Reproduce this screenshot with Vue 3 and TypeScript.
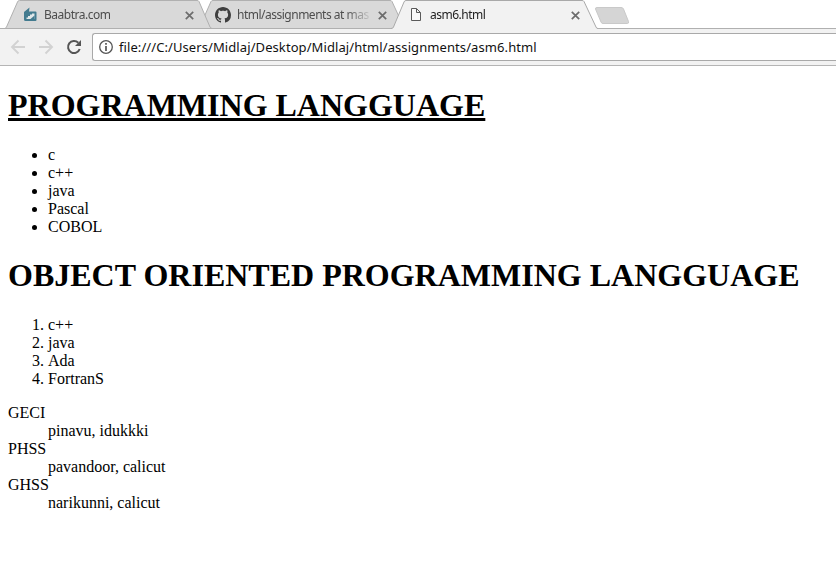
<script setup lang="ts">
interface Tab {
  title: string
  icon: 'site' | 'github' | 'file'
  active: boolean
}

interface School {
  name: string
  place: string
}

const tabs: Tab[] = [
  { title: 'Baabtra.com', icon: 'site', active: false },
  { title: 'html/assignments at mas', icon: 'github', active: false },
  { title: 'asm6.html', icon: 'file', active: true },
]
const url = 'file:///C:/Users/Midlaj/Desktop/Midlaj/html/assignments/asm6.html'
const languages: string[] = ['c', 'c++', 'java', 'Pascal', 'COBOL']
const objectOriented: string[] = ['c++', 'java', 'Ada', 'FortranS']
const schools: School[] = [
  { name: 'GECI', place: 'pinavu, idukkki' },
  { name: 'PHSS', place: 'pavandoor, calicut' },
  { name: 'GHSS', place: 'narikunni, calicut' },
]
</script>

<template>
  <div class="browser">
    <header class="tab-strip">
      <svg class="tab-shapes" width="836" height="29" viewBox="0 0 836 29">
        <path d="M204.500 28.500 L205 15 L211 1.500 Q211.500 .5 213 .5 H390 Q391.500 .5 392 1.500 L404.500 28.500" fill="#d9d9d9" stroke="#b0b0b0" />
        <path d="M5 28.500 Q6 28 6.500 27 L17.500 2 Q18 .5 19.500 .5 H197 Q198.500 .5 199 1.500 L210 27 Q210.500 28 212 28.500" fill="#d9d9d9" stroke="#b0b0b0" />
        <path d="M0 28.500 H836" stroke="#b0b0b0" />
        <path d="M391 29 V28.500 Q393 28.500 393.500 27 L404 2 Q404.500 .5 406 .5 H582 Q583.500 .5 584 1.500 L596 27 Q596.500 28.500 598 28.500 V29 Z" fill="#f2f2f2" />
        <path d="M391 28.500 Q393 28.500 393.500 27 L404 2 Q404.500 .5 406 .5 H582 Q583.500 .5 584 1.500 L596 27 Q596.500 28.500 598 28.500" fill="none" stroke="#a9a9a9" />
        <path d="M597 7.500 H621 Q623 7.500 623.500 9 L628.500 21.500 Q629 23.500 627.500 23.500 H603 Q601.500 23.500 601 22 L595.500 9 Q595.200 7.500 597 7.500Z" fill="#d5d5d5" stroke="#c9c9c9" />
      </svg>
      <div v-for="tab in tabs" :key="tab.title" class="tab" :class="{ active: tab.active }">
        <svg v-if="tab.icon === 'site'" class="favicon" width="16" height="16" viewBox="0 0 16 16">
          <path d="M2 5 L7.500 .5 L7 4.500 H13.500 Q14.500 4.500 14.500 5.500 V13 Q14.500 14 13.500 14 H3.500 Q2 14 2 12.500Z" fill="#437b8f" />
          <path d="M4.500 12 V10.500 H6 V9 H8 V7.500 H10 V6.500 H12.500 V12Z" fill="#e0e7e9" />
          <path d="M12.500 8.500 V12 H8.500Z" fill="#437b8f" />
        </svg>
        <svg v-else-if="tab.icon === 'github'" class="favicon" width="16" height="16" viewBox="0 0 16 16">
          <path fill="#3f3f3f" d="M8 0C3.580 0 0 3.580 0 8c0 3.540 2.290 6.530 5.470 7.590.4.070.55-.17.55-.38 0-.19-.01-.82-.01-1.490-2.010.37-2.530-.49-2.690-.94-.09-.23-.48-.94-.82-1.130-.28-.15-.68-.52-.01-.53.63-.01 1.080.58 1.230.82.72 1.210 1.870.87 2.330.66.07-.52.28-.87.51-1.070-1.780-.2-3.640-.89-3.640-3.950 0-.87.31-1.590.82-2.150-.08-.2-.36-1.020.08-2.120 0 0 .67-.21 2.200.82.64-.18 1.320-.27 2-.27s1.360.09 2 .27c1.530-1.040 2.200-.82 2.200-.82.44 1.100.16 1.920.08 2.120.51.56.82 1.270.82 2.150 0 3.070-1.870 3.750-3.650 3.950.29.25.54.73.54 1.480 0 1.070-.01 1.930-.01 2.200 0 .21.15.46.55.38A8.010 8.010 0 0 0 16 8c0-4.420-3.580-8-8-8Z" />
        </svg>
        <svg v-else class="favicon" width="16" height="16" viewBox="0 0 16 16">
          <path d="M3.500 1.500 H8.500 L12.500 5.500 V13.500 H3.500Z M8.500 1.500 V5.500 H12.500" fill="#fafafa" stroke="#5a5a5a" />
        </svg>
        <span class="title">{{ tab.title }}</span>
        <svg class="close" width="9" height="9" viewBox="0 0 9 9">
          <path d="M.8 .8 L8.200 8.200 M8.200 .8 L.8 8.200" stroke="currentColor" stroke-width="1.700" />
        </svg>
      </div>
    </header>

    <nav class="toolbar">
      <svg class="arrow" width="16" height="16" viewBox="0 0 16 16">
        <path d="M15 8 H2.500 M8.500 1.500 L2 8 L8.500 14.500" fill="none" stroke="currentColor" stroke-width="1.900" />
      </svg>
      <svg class="arrow" width="16" height="16" viewBox="0 0 16 16">
        <path d="M1 8 H13.500 M7.500 1.500 L14 8 L7.500 14.500" fill="none" stroke="currentColor" stroke-width="1.900" />
      </svg>
      <svg class="reload" width="16" height="16" viewBox="0 0 16 16">
        <path d="M13.700 10 A6 6 0 1 1 12.300 3.800" fill="none" stroke="currentColor" stroke-width="2" />
        <path d="M15 1 V7 H9Z" fill="currentColor" />
      </svg>
      <div class="address">
        <svg class="info" width="16" height="16" viewBox="0 0 16 16">
          <circle cx="8" cy="8" r="6.300" fill="none" stroke="currentColor" stroke-width="1.300" />
          <path d="M8 4 V5.700 M8 7 V12" stroke="currentColor" stroke-width="1.700" />
        </svg>
        <span class="url">{{ url }}</span>
      </div>
    </nav>

    <main class="page">
      <h1 class="underlined">PROGRAMMING LANGGUAGE</h1>
      <ul>
        <li v-for="item in languages" :key="item">{{ item }}</li>
      </ul>
      <h1>OBJECT ORIENTED PROGRAMMING LANGGUAGE</h1>
      <ol>
        <li v-for="item in objectOriented" :key="item">{{ item }}</li>
      </ol>
      <dl>
        <template v-for="school in schools" :key="school.name">
          <dt>{{ school.name }}</dt>
          <dd>{{ school.place }}</dd>
        </template>
      </dl>
    </main>
  </div>
</template>

<style>
body {
  background: #fff;
  overflow: hidden;
}
</style>

<style scoped>
.browser {
  height: 563px;
  overflow: hidden;
  background: #fff;
}
.tab-strip {
  position: relative;
  display: flex;
  height: 29px;
  padding-left: 22px;
  box-sizing: border-box;
  font-family: "Noto Sans", sans-serif;
  font-size: 12px;
}
.tab-shapes {
  position: absolute;
  left: 0;
  top: 0;
}
.tab {
  position: relative;
  display: flex;
  align-items: center;
  width: 193px;
  height: 29px;
  padding-right: 21px;
  box-sizing: border-box;
  color: #4d4d4d;
}
.tab.active {
  color: #222;
}
.favicon {
  flex: none;
  margin-top: 1px;
}
.title {
  flex: none;
  width: 137px;
  margin-left: 6px;
  white-space: nowrap;
  line-height: 18px;
  letter-spacing: -0.5px;
  mask-image: linear-gradient(to right, #000 108px, transparent 136px);
}
.close {
  flex: none;
  margin-left: 3.500px;
  margin-top: 1px;
  color: #6c6c6c;
}
.toolbar {
  display: flex;
  align-items: center;
  height: 37px;
  padding-left: 10px;
  box-sizing: border-box;
  background: #f2f2f2;
  border-bottom: 1px solid #b5b5b5;
}
.arrow {
  margin-right: 12px;
  color: #d2d2d2;
}
.reload {
  color: #555;
}
.address {
  display: flex;
  flex: 1;
  align-items: center;
  height: 28px;
  margin-left: 10px;
  padding-left: 5px;
  box-sizing: border-box;
  background: #fff;
  border: 1px solid #a9a9a9;
  border-right: 0;
  border-radius: 3px 0 0 3px;
}
.info {
  color: #555;
}
.url {
  margin-left: 5px;
  font: 13px/18px "Noto Sans", sans-serif;
  letter-spacing: 0.085px;
  color: #111;
  white-space: nowrap;
}
.page {
  padding: 21px 8px 0;
  font: 16px/18px "Liberation Serif", "Times New Roman", serif;
  color: #000;
}
h1 {
  margin: 0 0 22px;
  font-size: 32px;
  line-height: 37px;
  white-space: nowrap;
}
.underlined {
  text-decoration: underline;
  text-decoration-thickness: 3px;
  text-underline-offset: 2px;
  text-decoration-skip-ink: none;
}
ul,
ol {
  margin: 0;
  padding-left: 40px;
}
ul {
  margin-bottom: 21px;
}
ol {
  margin-bottom: 16px;
}
dl {
  margin: 0;
}
dd {
  margin-left: 40px;
}
</style>
